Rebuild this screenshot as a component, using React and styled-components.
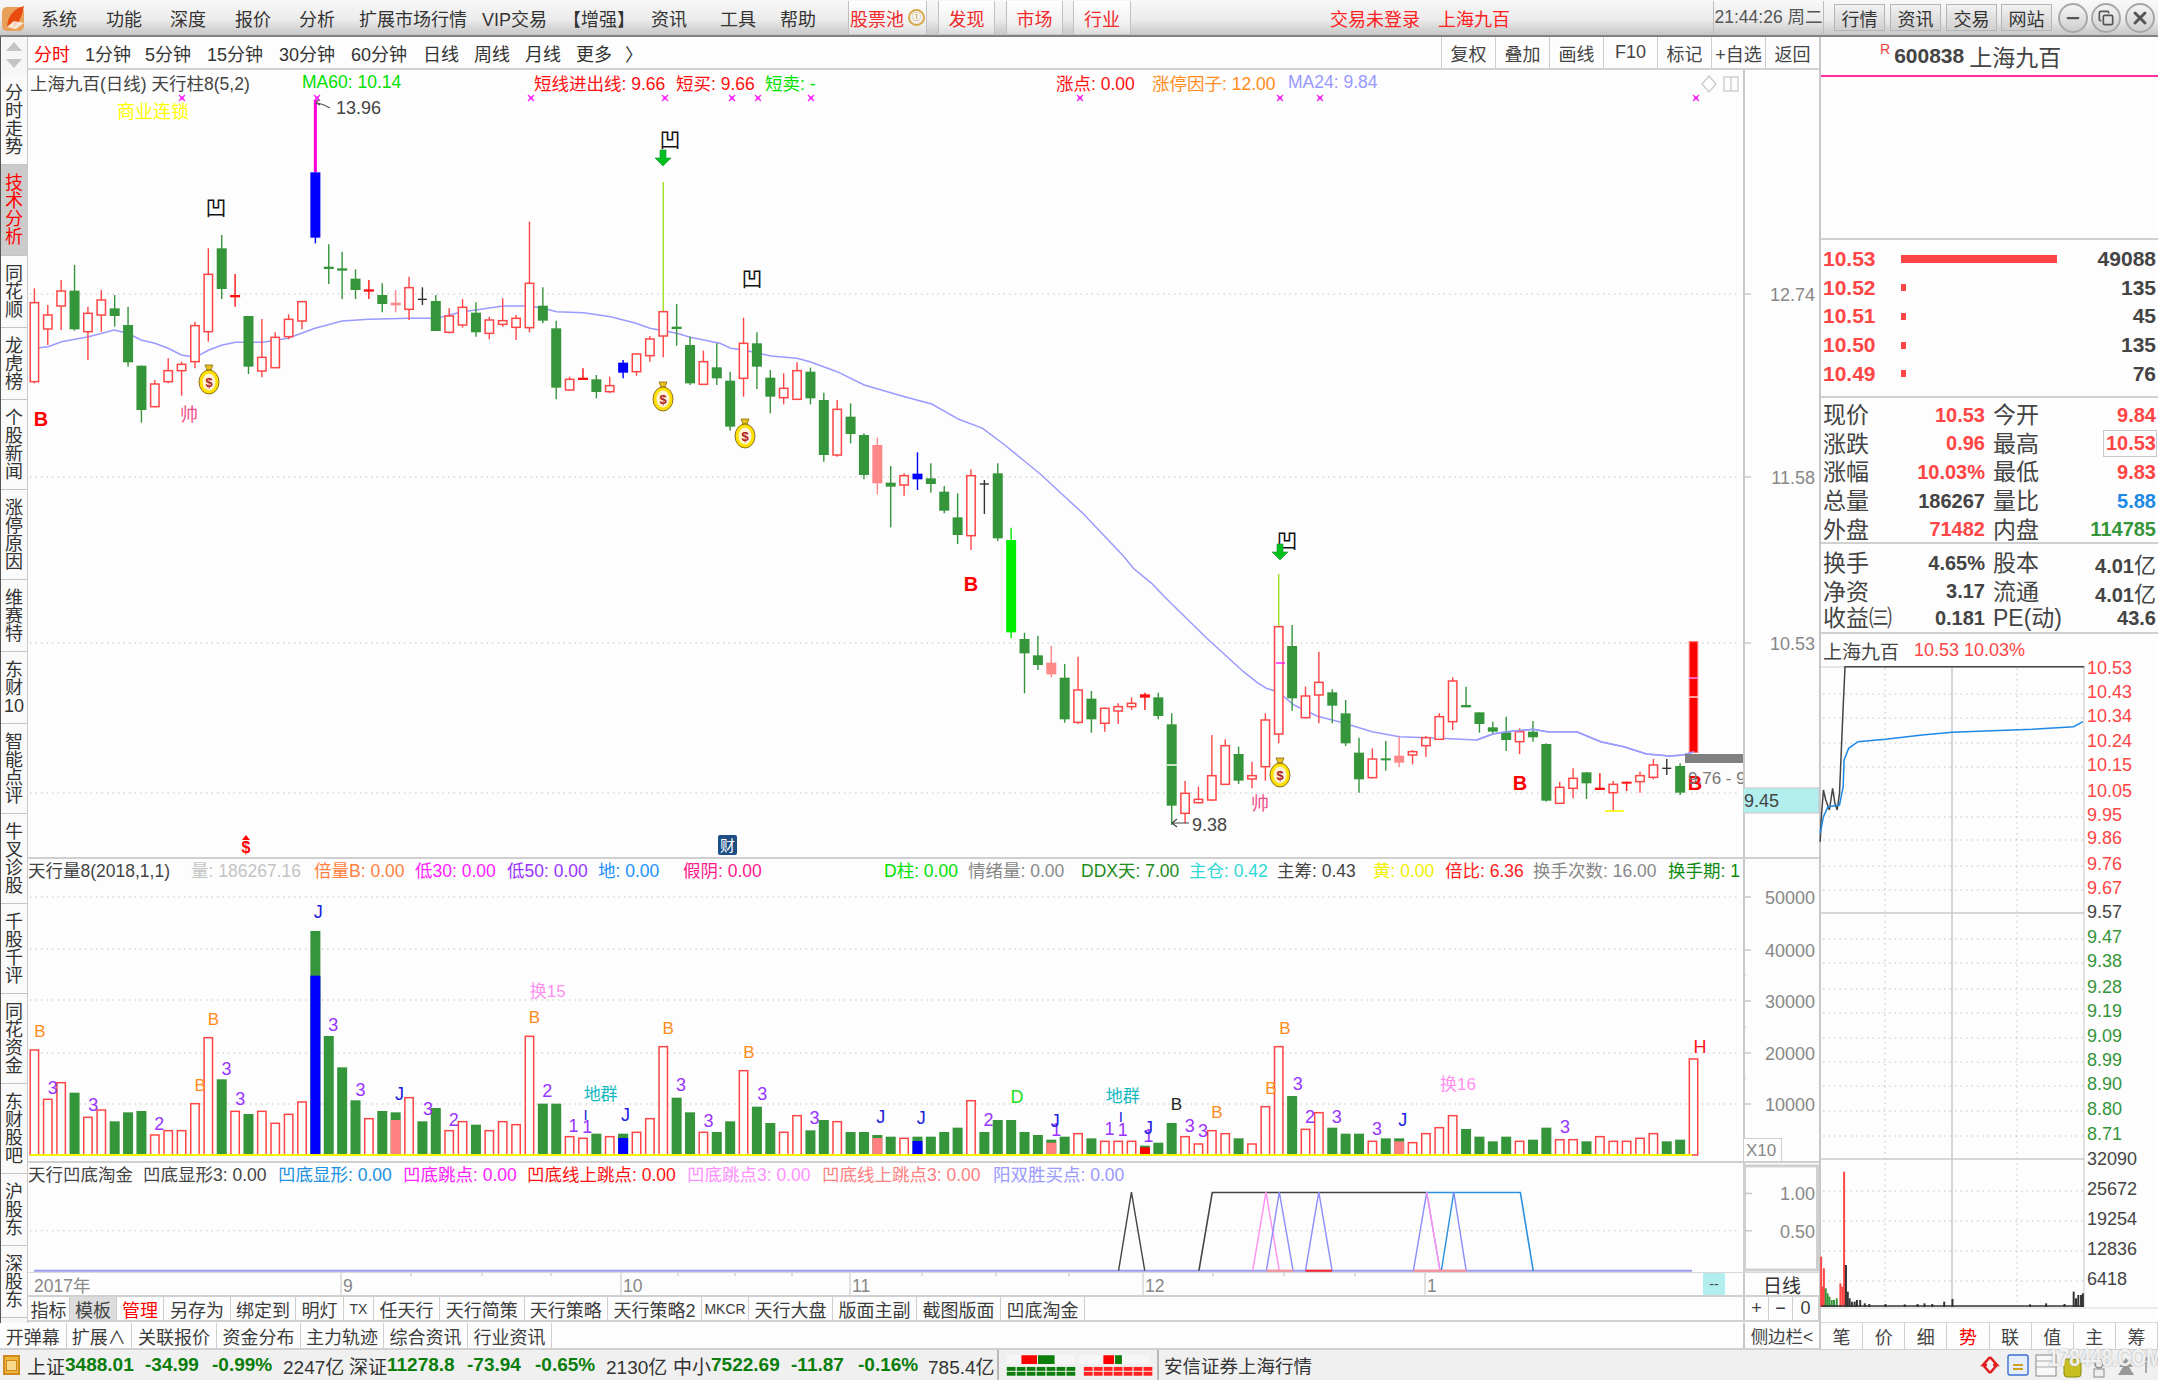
import React from "react";
import styled, { createGlobalStyle } from "styled-components";
import { Minus, Copy, X } from "lucide-react";

const FONT = `"Liberation Sans", "Noto Sans CJK SC", sans-serif`;

const GlobalStyle = createGlobalStyle`
	html, body {
		margin: 0;
		padding: 0;
		background: #fdfdfd;
	}
	body {
		font-family: ${FONT};
		width: 2158px;
		height: 1380px;
		overflow: hidden;
	}
`;

const RED = "#ff4545";
const GREEN = "#35953a";

/* candles: [kind, high, top, bottom, low], y values read from the picture */
const CANDLES_A = [
	["r",865,908,1145,1150],["r",915,945,987,1035],["r",840,873,918,990],["g",795,872,988,992],["r",920,940,995,1080],
	["r",870,900,945,995],["g",885,925,948,980],["g",920,975,1087,1100],["g",1097,1097,1230,1268],["r",1140,1152,1220,1222],
	["r",1075,1112,1145,1150],["r",1085,1093,1112,1187],["r",965,977,1085,1105],["r",745,823,995,1025],["g",705,745,867,897],
	["R",822,885,892,920],["g",948,948,1100,1122],["r",957,1072,1113,1132],["r",997,1012,1103,1105],["r",943,958,1010,1018],
	["r",905,905,963,988],["b",517,517,713,730],["g",733,800,807,852],["g",755,805,812,897],["g",808,836,870,897],
	["R",840,868,875,897],["g",850,885,912,937],["p",870,908,916,937],["r",830,863,928,960],["k",862,898,898,915],
	["g",885,903,993,993],["r",925,948,997,1000],["r",897,922,975,983],["g",907,938,997,1010],["r",950,960,1000,1018],
	["r",895,962,973,980],["r",945,955,982,1020],["r",665,850,983,997],["g",862,917,962,970],["g",962,985,1163,1198],
	["r",1130,1138,1170,1172],["R",1105,1133,1140,1140],["g",1125,1138,1176,1195],["r",1130,1157,1175,1180],["b",1080,1088,1118,1135],
	["r",1060,1062,1115,1127],["r",1008,1017,1067,1085],["r",935,935,1008,1072],["g",912,980,987,1037],["g",1010,1035,1150,1155],
	["r",1052,1085,1153,1155],["g",1030,1102,1135,1155],["g",1115,1142,1280,1292],["r",953,1030,1135,1190],["g",997,1030,1100,1167],
	["g",1110,1133,1190,1240],["r",1120,1165,1193,1213],["r",1087,1112,1198,1198],["g",1103,1115,1195,1213],["g",1178,1200,1365,1385],
	["r",1200,1228,1365,1370],["g",1210,1250,1302,1330],
];
const CANDLES_B = [
	["g",-80,-75,45,58],["p",-67,-45,70,103],["g",18,68,80,202],["r",40,47,75,107],["b",-23,41,58,90],
	["g",10,55,72,98],["g",78,95,152,160],["g",100,172,225,252],["r",28,47,227,270],["k",60,72,72,162],
	["g",10,40,235,243],["l",203,240,517,535],["g",518,537,580,700],["g",527,586,615,630],["p",558,608,643,652],
	["g",612,653,778,788],["r",590,690,787,792],["g",693,716,778,818],["r",743,745,790,815],["r",730,740,753,792],
	["r",712,730,740,750],["R",698,703,713,750],["g",698,712,768,778],["g",760,793,1037,1095],["r",963,1000,1060,1090],
	["r",980,1018,1028,1030],["r",825,947,1020,1022],["r",838,857,973,975],["g",860,882,962,972],["r",905,947,957,985],
	["r",760,780,920,962],["r",500,500,822,850],["g",495,558,715,752],["r",680,708,773,775],["r",575,667,705,790],
	["g",688,697,737,790],["g",720,760,850,858],["g",833,878,958,998],["r",865,897,953,955],["g",843,895,898,932],
	["p",830,887,908,922],["r",870,875,885,913],["r",828,833,857,890],["r",760,770,838,840],["r",652,663,785,810],
	["g",680,735,742,742],["g",757,757,792,818],["g",785,802,815,822],["g",770,817,840,873],["r",805,815,845,882],
	["g",783,815,832,845],["g",850,852,1022,1025],["r",965,982,1030,1030],["r",925,955,985,1015],["g",937,937,970,1017],
	["R",940,983,990,990],["r",963,973,998,1053],["R",965,965,970,993],["r",935,947,965,998],["r",897,915,952,958],
	["k",897,925,925,945],["g",910,918,998,1005],["F",545,545,877,877],
];
const CANDLES = [
	...CANDLES_A.map(([k, ...v]) => [k, ...v.map((n) => n / 3)]),
	...CANDLES_B.map(([k, ...v]) => [k, ...v.map((n) => 460 + n / 3)]),
];

const VOLUMES = [
	"r390","r538","r488","g518","r592","r570","g604","g577","g573","r645","r632","r632","r551","r353","g478","r574","g582","r574","r610","r583",
	"r546","g33","g348","g442","g541","r596","g573","g577","r533","g604","g564","r632","r605","g614","r632","r605","r614","r349","g551","g551",
	"r650","r655","g641","r650","g641","r637","r596","r380","g533","g577","r637","g636","g604","r452","g560","g609","r637","r587","g631","g600",
	"r605","g636","g636","g645","g650","r655","g650","g650","g636","g623","r542","g636","g600","g600","g636","g645","g659","g650","r641","g655",
	"r664","r664","r664","g677","g668","g609","r650","r672","r632","r641","g655","r672","r560","r380","g528","r628","r578","g623","g641","g641",
	"r664","g655","g655","r668","r641","r623","r587","g627","g650","g664","g650","r664","g659","g623","r659","r659","g664","r650","r664","r664",
	"r655","r641","g664","g659","r417",
];
const VOLUME_SPLIT = {
	21: ["#0000ff", 167], 27: ["#ff8080", 600], 44: ["#0000ff", 654], 63: ["#ff8080", 654], 66: ["#0000ff", 663],
	76: ["#ff8080", 668], 83: ["#ff0000", 682], 102: ["#ff8080", 664],
};

const MA_Z1 = [[75,1045],[105,1040],[134,1025],[193,1010],[249,990],[278,1000],[307,1020],[337,1030],[366,1045],[395,1065],[425,1072],[455,1050],[484,1035],[513,1027],[572,1027],[627,1015],[686,985],[745,963],[803,958],[892,955],[951,955],[1007,935],[1036,930],[1095,918],[1153,918],[1183,925],[1212,935],[1271,938],[1330,950],[1385,970],[1415,985],[1444,992],[1474,1000],[1503,1012],[1562,1028]];
const MA_Z2 = [[0,1030],[23,1045],[52,1050],[111,1068],[167,1075],[196,1085],[255,1115],[314,1155],[402,1190],[461,1212],[520,1258],[572,1285],[620,1335],[660,1380]];
const MA_Z5 = [[700,45],[735,90],[790,160],[880,290],[900,325],[940,370],[968,410],[1060,535],[1140,635],[1170,668],[1190,685],[1215,695],[1250,735],[1300,768],[1360,790],[1420,815],[1480,830],[1568,835]];
const MA_Z6 = [[80,840],[115,822],[145,815],[203,808],[233,815],[298,815],[350,845],[400,860],[450,882],[500,888],[530,885],[553,875]];

const zx = (n, x0) => x0 + n * 0.4592;
const pts = (list, x0, y0) => list.map(([a, b]) => `${zx(a, x0).toFixed(1)},${(y0 + b / 3).toFixed(1)}`).join(" ");

const MA_LINE = [pts(MA_Z1, 0, 0), pts(MA_Z2, 720, 0), pts(MA_Z5, 720, 460), pts(MA_Z6, 1440, 460)].join(" ");

const candleX = (i) => 34.4 + 13.38 * i;

const Page = styled.div`
	width: 2158px;
	height: 1380px;
	display: flex;
	flex-direction: column;
	position: relative;
	background: #fdfdfd;
	color: #444;
	overflow: hidden;
`;

const TopBar = styled.div`
	height: 35px;
	flex: none;
	display: flex;
	align-items: center;
	background: linear-gradient(#f8f8f8, #ececec 55%, #c6c6c6);
	border-bottom: 2px solid #808080;
`;

const Logo = styled.svg`
	width: 28px;
	height: 30px;
	flex: none;
	margin-right: 13px;
`;

const MenuItem = styled.div`
	flex: 0 0 ${(p) => p.$w}px;
	margin-left: ${(p) => p.$left || 0}px;
	font-size: 18px;
	color: ${(p) => p.$color || "#333"};
	white-space: nowrap;
`;

const TopButton = styled.div`
	flex: none;
	height: 33px;
	width: ${(p) => p.$w}px;
	margin-right: ${(p) => p.$gap || 0}px;
	display: flex;
	align-items: center;
	justify-content: center;
	gap: 4px;
	font-size: 18px;
	color: #f02a2a;
	background: linear-gradient(#fff, #f0f0f0 70%, #dcdcdc);
	border-left: 1px solid #c0c0c0;
	border-right: 1px solid #c0c0c0;
	box-sizing: border-box;
`;

const Coin = styled.span`
	width: 13px;
	height: 13px;
	border-radius: 50%;
	border: 2px solid #d8a94a;
	color: #c08a20;
	font-size: 9px;
	line-height: 13px;
	text-align: center;
	box-sizing: content-box;
`;

const Clock = styled.div`
	flex: 0 0 111px;
	height: 33px;
	line-height: 33px;
	text-align: center;
	font-size: 17.5px;
	color: #555;
	margin-left: ${(p) => p.$left}px;
	border-left: 1px solid #bbb;
	border-right: 1px solid #bbb;
	box-sizing: border-box;
	white-space: nowrap;
`;

const SoftButton = styled.div`
	flex: 0 0 51px;
	height: 27px;
	margin-left: ${(p) => p.$left}px;
	display: flex;
	align-items: center;
	justify-content: center;
	font-size: 18px;
	color: #333;
	background: linear-gradient(#f2f2f2, #d0d0d0);
	border: 1px solid #b5b5b5;
	box-sizing: border-box;
`;

const RoundButton = styled.div`
	flex: 0 0 30px;
	height: 30px;
	margin-left: ${(p) => p.$left}px;
	border-radius: 50%;
	display: flex;
	align-items: center;
	justify-content: center;
	color: #555;
	background: linear-gradient(#f4f4f4, #cfcfcf);
	border: 2px solid #a8a8a8;
	box-sizing: border-box;
`;

const Body = styled.div`
	flex: 1;
	display: flex;
	min-height: 0;
`;

const LeftColumn = styled.div`
	width: 1819px;
	flex: none;
	display: flex;
	flex-direction: column;
`;

const Upper = styled.div`
	flex: 1;
	display: flex;
	min-height: 0;
`;

const Rail = styled.div`
	width: 28px;
	flex: none;
	display: flex;
	flex-direction: column;
	border-left: 1px solid #555;
	border-right: 1px solid #c8c8c8;
	box-sizing: border-box;
	background: #f6f6f6;
`;

const RailScroll = styled.div`
	height: 38px;
	flex: none;
	display: flex;
	flex-direction: column;
	align-items: center;
	gap: 8px;
	padding-top: 5px;
	box-sizing: border-box;
`;

const Arrow = styled.div`
	width: 0;
	height: 0;
	border-left: 8px solid transparent;
	border-right: 8px solid transparent;
	border-${(p) => (p.$down ? "top" : "bottom")}: 9px solid #c4c4c4;
`;

const RailItem = styled.div`
	height: ${(p) => p.$h}px;
	flex: none;
	display: flex;
	flex-direction: column;
	align-items: center;
	justify-content: center;
	font-size: 18px;
	line-height: 18px;
	color: ${(p) => (p.$active ? "#ff0000" : "#333")};
	background: ${(p) => (p.$active ? "#cbcbcb" : "#fafafa")};
	border-bottom: 1px solid #c4c4c4;
	box-sizing: border-box;
`;

const Main = styled.div`
	flex: 1;
	display: flex;
	flex-direction: column;
	min-width: 0;
`;

const PeriodBar = styled.div`
	height: 33px;
	flex: none;
	display: flex;
	align-items: center;
	justify-content: space-between;
	border-bottom: 2px solid #d2d2d2;
	box-sizing: border-box;
`;

const Periods = styled.div`
	display: flex;
	align-items: center;
	padding-left: 6px;
`;

const Period = styled.div`
	flex: 0 0 ${(p) => p.$w}px;
	font-size: 18px;
	color: ${(p) => (p.$active ? "#ff0000" : "#333")};
	white-space: nowrap;
`;

const Tools = styled.div`
	display: flex;
	height: 100%;
`;

const Tool = styled.div`
	width: 54px;
	display: flex;
	align-items: center;
	justify-content: center;
	font-size: 18px;
	color: #444;
	border-left: 1px solid #cfcfcf;
	box-sizing: border-box;
`;

const Pane = styled.div`
	height: ${(p) => p.$h}px;
	flex: none;
	display: flex;
	border-top: ${(p) => (p.$line ? "2px solid #cfcfcf" : "none")};
	box-sizing: border-box;
`;

const Plot = styled.div`
	flex: 1;
	position: relative;
	min-width: 0;
`;

const PlotDrawing = styled.svg`
	position: absolute;
	left: 0;
	top: 0;
	width: 100%;
	height: 100%;
	display: block;
`;

const Legend = styled.div`
	position: relative;
	z-index: 1;
	height: ${(p) => p.$h}px;
	display: flex;
	align-items: center;
	padding-left: ${(p) => p.$left || 0}px;
	font-size: 17.5px;
	white-space: nowrap;
`;

const LegendItem = styled.div`
	flex: 0 0 ${(p) => p.$w}px;
	color: ${(p) => p.$color};
`;

const Scale = styled.div`
	width: 76px;
	flex: none;
	position: relative;
	border-left: 2px solid #c8c8c8;
	box-sizing: border-box;
`;

const ScaleDrawing = styled.svg`
	position: absolute;
	left: -2px;
	top: 0;
	width: 76px;
	height: 100%;
	display: block;
`;

const TimeRow = styled.div`
	height: 25px;
	flex: none;
	display: flex;
	border-top: 1px solid #d8d8d8;
	border-bottom: 2px solid #d0d0d0;
	box-sizing: border-box;
`;

const TimePlot = styled.div`
	flex: 1;
	position: relative;
`;

const TimeCell = styled.div`
	width: 76px;
	flex: none;
	display: flex;
	align-items: center;
	justify-content: center;
	font-size: 19px;
	color: #333;
	border-left: 2px solid #c8c8c8;
	box-sizing: border-box;
`;

const TabRow = styled.div`
	height: ${(p) => p.$h}px;
	flex: none;
	display: flex;
	border-bottom: 2px solid #d0d0d0;
	box-sizing: border-box;
`;

const Tab = styled.div`
	flex: 0 0 ${(p) => p.$w}px;
	display: flex;
	align-items: center;
	justify-content: center;
	font-size: ${(p) => p.$size || 18}px;
	color: ${(p) => p.$color || "#3c3c3c"};
	background: ${(p) => p.$bg || "transparent"};
	border-right: 1px solid #cfcfcf;
	box-sizing: border-box;
	white-space: nowrap;
`;

const TabFill = styled.div`
	flex: 1;
`;

const ZoomCell = styled.div`
	width: 76px;
	flex: none;
	display: flex;
	border-left: 2px solid #c8c8c8;
	box-sizing: border-box;
`;

const SideToggle = styled.div`
	width: 76px;
	flex: none;
	display: flex;
	align-items: center;
	justify-content: center;
	font-size: 17.5px;
	color: #444;
	border-left: 2px solid #c8c8c8;
	box-sizing: border-box;
`;

const Panel = styled.div`
	flex: 1;
	display: flex;
	flex-direction: column;
	border-left: 2px solid #c8c8c8;
	box-sizing: border-box;
	min-width: 0;
`;

const QuoteTitle = styled.div`
	height: 40px;
	flex: none;
	display: flex;
	align-items: center;
	padding-left: 59px;
	gap: 5px;
	color: #444;
	border-bottom: 2px solid #ff2fa0;
	box-sizing: border-box;
`;

const TitleFlag = styled.span`
	font-size: 14px;
	color: #f04040;
	margin-bottom: 14px;
	margin-right: -1px;
`;

const TitleCode = styled.span`
	font-size: 21px;
	font-weight: 700;
`;

const TitleName = styled.span`
	font-size: 23px;
`;

const BlankBlock = styled.div`
	height: 163px;
	flex: none;
	border-bottom: 2px solid #cfcfcf;
	box-sizing: border-box;
`;

const Book = styled.div`
	height: 158px;
	flex: none;
	padding: 5px 2px 0 2px;
	border-bottom: 2px solid #cfcfcf;
	box-sizing: border-box;
`;

const BookRow = styled.div`
	height: 28.6px;
	display: flex;
	align-items: center;
	font-size: 21px;
	font-weight: 700;
`;

const BookPrice = styled.span`
	flex: 0 0 78px;
	color: ${RED};
`;

const BookBar = styled.span`
	height: ${(p) => (p.$w > 10 ? 8 : 7)}px;
	width: ${(p) => p.$w}px;
	background: ${RED};
`;

const BookVolume = styled.span`
	margin-left: auto;
	color: #444;
`;

const Stats = styled.div`
	height: ${(p) => p.$h}px;
	flex: none;
	padding: 3px 2px 0 2px;
	border-bottom: 2px solid #cfcfcf;
	box-sizing: border-box;
`;

const StatRow = styled.div`
	height: 28.6px;
	display: grid;
	grid-template-columns: 162px 163px;
	column-gap: 8px;
`;

const StatCell = styled.div`
	display: flex;
	align-items: center;
	justify-content: space-between;
`;

const StatLabel = styled.span`
	font-size: 23px;
	line-height: 28px;
	color: #444;
	white-space: nowrap;
`;

const StatValue = styled.span`
	font-size: 20px;
	font-weight: 700;
	color: ${(p) => p.$color || "#444"};
	box-shadow: ${(p) => (p.$boxed ? "0 0 0 1px #c8c8c8" : "none")};
	padding: ${(p) => (p.$boxed ? "1px 0 1px 2px" : "0")};
	white-space: nowrap;
`;

const Unit = styled.span`
	font-size: 22px;
	font-weight: 400;
`;

const MiniHead = styled.div`
	height: 32px;
	flex: none;
	display: flex;
	align-items: center;
	padding-left: 2px;
	gap: 15px;
	font-size: 19px;
	color: #444;
`;

const MiniQuote = styled.span`
	font-size: 18px;
	color: ${RED};
`;

const MiniDrawing = styled.svg`
	width: 337px;
	height: 656px;
	flex: none;
	display: block;
	overflow: visible;
`;

const PanelTabs = styled.div`
	flex: none;
	height: 26px;
	display: flex;
	border-top: 1px solid #d8d8d8;
	border-bottom: 2px solid #d0d0d0;
	box-sizing: content-box;
`;

const PanelTab = styled.div`
	flex: 1;
	display: flex;
	align-items: center;
	justify-content: center;
	font-size: 18px;
	color: ${(p) => (p.$active ? "#ff0000" : "#444")};
	border-right: 1px solid #cfcfcf;
	box-sizing: border-box;
`;

const StatusBar = styled.div`
	height: 30px;
	flex: none;
	display: flex;
	align-items: center;
	background: #f0f0f0;
	white-space: nowrap;
`;

const StatusIcon = styled.div`
	flex: none;
	width: 17px;
	height: 20px;
	margin: 0 7px 0 3px;
	background: #f2b53c;
	border: 2px solid #d08a20;
	box-sizing: border-box;
	display: flex;
	align-items: center;
	justify-content: center;
`;

const StatusInner = styled.div`
	width: 9px;
	height: 9px;
	background: #f9d98a;
	border: 1px solid #c98a20;
`;

const StatusCell = styled.div`
	flex: 0 0 ${(p) => p.$w}px;
	font-size: 19px;
	font-weight: ${(p) => (p.$num ? 700 : 400)};
	color: ${(p) => (p.$num ? "#0b7d0b" : "#333")};
`;

const Heat = styled.svg`
	flex: none;
	width: 162px;
	height: 30px;
	display: block;
	border-left: 2px solid #b8b8b8;
	border-right: 2px solid #b8b8b8;
	box-sizing: border-box;
	margin-right: 5px;
`;

const Broker = styled.div`
	font-size: 18.5px;
	color: #333;
`;

const TrayIcons = styled.svg`
	position: absolute;
	right: 0;
	bottom: 0;
	width: 190px;
	height: 30px;
	display: block;
`;

const Watermark = styled.div`
	position: absolute;
	left: 2048px;
	top: 1344px;
	font-size: 24px;
	font-weight: 700;
	color: rgba(255, 255, 255, 0.85);
	text-shadow: 0 0 2px #999;
	transform: scaleX(0.8);
	transform-origin: left top;
	white-space: nowrap;
`;

const Ink = styled.text`
	font-family: ${FONT};
	font-size: ${(p) => p.$size || 18}px;
	font-weight: ${(p) => p.$weight || 400};
	fill: ${(p) => p.$color || "#444"};
`;

const RAIL = ["分时走势", "技术分析", "同花顺", "龙虎榜", "个股新闻", "涨停原因", "维赛特", ["东", "财", "10"], "智能点评", "牛叉诊股", "千股千评", "同花资金", "东财股吧", "沪股东", "深股东"];

const MENU = [["系统",65],["功能",64],["深度",65],["报价",64],["分析",60],["扩展市场行情",123],["VIP交易",81],["【增强】",88],["资讯",69],["工具",60],["帮助",68]];

const PERIODS = [["分时",51],["1分钟",60],["5分钟",62],["15分钟",72],["30分钟",72],["60分钟",72],["日线",51],["周线",51],["月线",51],["更多",49],["〉",20]];

const TOOLS = ["复权", "叠加", "画线", "F10", "标记", "+自选", "返回"];

const LEGEND_MAIN = [
	["上海九百(日线) 天行柱8(5,2)",272,"#444"],["MA60: 10.14",232,"#00e000"],["短线进出线: 9.66",142,"#ff1010"],["短买: 9.66",89,"#ff1010"],
	["短卖: -",291,"#00e000"],["涨点: 0.00",96,"#ff1010"],["涨停因子: 12.00",136,"#ff8c1a"],["MA24: 9.84",150,"#9999ff"],
];
const LEGEND_VOL = [
	["天行量8(2018,1,1)",163,"#444"],["量: 186267.16",123,"#c4c4c4"],["倍量B: 0.00",101,"#ff8040"],["低30: 0.00",92,"#ff20ff"],["低50: 0.00",91,"#9933ff"],
	["地: 0.00",85,"#2090ff"],["假阴: 0.00",201,"#ff1a8c"],["D柱: 0.00",84,"#00e000"],["情绪量: 0.00",113,"#888"],["DDX天: 7.00",108,"#1c8c1c"],
	["主仓: 0.42",88,"#30d8d8"],["主筹: 0.43",96,"#444"],["黄: 0.00",72,"#f0f000"],["倍比: 6.36",88,"#ff2020"],["换手次数: 16.00",135,"#888"],["换手期: 1",75,"#0b8a0b"],
];
const LEGEND_IND = [
	["天行凹底淘金",115,"#444"],["凹底显形3: 0.00",135,"#444"],["凹底显形: 0.00",125,"#2090e0"],["凹底跳点: 0.00",124,"#ff20ff"],["凹底线上跳点: 0.00",160,"#ff1010"],
	["凹底跳点3: 0.00",135,"#ff90ff"],["凹底线上跳点3: 0.00",171,"#ff8080"],["阳双胜买点: 0.00",150,"#9999ff"],
];

const TABS1 = [["指标",42],["模板",47,"#444","#dcdcdc"],["管理",47,"#ff0000"],["另存为",67],["绑定到",65],["明灯",48],["TX",30],["任天行",66],["天行简策",84.5],["天行策略",83.5],["天行策略2",94],["MKCR",47],["天行大盘",84],["版面主副",84],["截图版面",84],["凹底淘金",84]];
const TABS2 = [["开弹幕",66.5],["扩展∧",65.5],["关联报价",85],["资金分布",84],["主力轨迹",83],["综合资讯",84],["行业资讯",84]];

const BOOK = [["10.53",156,"49088"],["10.52",5,"135"],["10.51",5,"45"],["10.50",5,"135"],["10.49",5,"76"]];

const STATS_A = [
	["现价",["10.53",RED],"今开",["9.84",RED]],
	["涨跌",["0.96",RED],"最高",["10.53",RED,true]],
	["涨幅",["10.03%",RED],"最低",["9.83",RED]],
	["总量",["186267"],"量比",["5.88","#1e88e5"]],
	["外盘",["71482",RED],"内盘",["114785",GREEN]],
];
const STATS_B = [
	["换手",["4.65%"],"股本",["4.01","","亿"]],
	["净资",["3.17"],"流通",["4.01","","亿"]],
	["收益㈢",["0.181"],"PE(动)",["43.6"]],
];

const MARKET = [
	[["上证",36],["3488.01",80,1],["-34.99",67,1],["-0.99%",71,1],["2247亿",66]],
	[["深证",37],["11278.8",80,1],["-73.94",68,1],["-0.65%",71,1],["2130亿",67]],
	[["中小",37],["7522.69",80,1],["-11.87",67,1],["-0.16%",70,1],["785.4亿",69]],
];

const GridLines = ({ ys, x2 }) =>
	ys.map((y) => <line key={y} x1="30" x2={x2} y1={y} y2={y} stroke="#c4c4c4" strokeDasharray="1.5 4" />);

const Candle = ({ data, i }) => {
	const [kind, high, top, bottom, low] = data;
	const x = candleX(i);
	const colors = { r: RED, R: "#ff1010", g: GREEN, b: "#0000ff", l: "#00ee00", p: "#ff8888", k: "#333", F: "#ff0000" };
	const c = colors[kind];
	const h = Math.max(bottom - top, 2);
	if (kind === "k") {
		return (
			<g stroke="#333" strokeWidth="1.4">
				<line x1={x} x2={x} y1={high} y2={low} />
				<line x1={x - 4.5} x2={x + 4.5} y1={top} y2={top} />
			</g>
		);
	}
	return (
		<g>
			<line x1={x} x2={x} y1={high} y2={low} stroke={c} strokeWidth="1.4" />
			{kind === "r" ? (
				<rect x={x - 4.2} y={top} width="8.4" height={h} fill="#fdfdfd" stroke={c} strokeWidth="1.5" />
			) : kind === "F" ? (
				<rect x={x - 4.2} y={top} width="8.4" height={h} fill="#ff0000" stroke="#ff7070" strokeWidth="1.2" />
			) : (
				<rect x={x - 5} y={top} width="10" height={h} fill={c} />
			)}
		</g>
	);
};

const Cross = ({ x }) => (
	<g stroke="#ff20ff" strokeWidth="1.3">
		<line x1={x - 3} x2={x + 3} y1="95" y2="101" />
		<line x1={x + 3} x2={x - 3} y1="95" y2="101" />
		<rect x={x - 1.5} y="96.5" width="3" height="3" fill="#ff20ff" stroke="none" />
	</g>
);

const MoneyBag = ({ x, y }) => (
	<g>
		<path d={`M${x - 4} ${y - 17} h8 l-2 5 h-4 z`} fill="#e8c020" stroke="#8a6a10" strokeWidth="0.8" />
		<ellipse cx={x} cy={y} rx="10" ry="12" fill="#ffe000" stroke="#705010" strokeWidth="0.8" />
		<ellipse cx={x} cy={y} rx="6.5" ry="8.5" fill="#fff4d8" />
		<Ink x={x} y={y + 5} $size={13} $weight={700} $color="#b02020" textAnchor="middle">$</Ink>
	</g>
);

const DownArrow = ({ x, y }) => (
	<path d={`M${x - 3} ${y} h6 v8 h5 l-8 8 l-8 -8 h5 z`} fill="#00c020" stroke="#109030" strokeWidth="0.6" />
);

const MainDrawing = () => (
	<PlotDrawing viewBox="28 70 1715 787" preserveAspectRatio="none">
		<GridLines ys={[294, 477, 643, 793]} x2={1740} />
		{[182, 317, 531, 665, 732, 758, 811, 1080, 1280, 1320, 1696].map((x) => <Cross key={x} x={x} />)}
		<polyline points={MA_LINE} fill="none" stroke="#9a9aff" strokeWidth="1.5" />
		<line x1={candleX(21)} x2={candleX(21)} y1="100" y2="172" stroke="#ff00dd" strokeWidth="3" />
		<line x1={candleX(47)} x2={candleX(47)} y1="182" y2="312" stroke="#a0e020" strokeWidth="1.4" />
		<line x1={candleX(93)} x2={candleX(93)} y1="574" y2="627" stroke="#a0e020" strokeWidth="1.4" />
		{CANDLES.map((d, i) => <Candle key={i} data={d} i={i} />)}
		<polyline points={pts(MA_Z6, 1440, 460)} fill="none" stroke="#9a9aff" strokeWidth="1.5" />
		<line x1="1276" x2="1285" y1="663" y2="663" stroke="#ff20ff" strokeWidth="1.5" />
		<line x1="1167" x2="1177" y1="765" y2="765" stroke="#fff" strokeWidth="1.5" />
		<line x1="1689" x2="1698" y1="678" y2="678" stroke="#ff80ff" strokeWidth="1.5" />
		<line x1="1689" x2="1698" y1="697" y2="697" stroke="#ffd0d0" strokeWidth="1.5" />
		<line x1="1605" x2="1624" y1="811" y2="811" stroke="#f5f500" strokeWidth="1.6" />
		<rect x="1685" y="754" width="58" height="9" fill="#808080" />
		{[[216, 215], [670, 147], [752, 286], [1287, 548]].map(([x, y]) => (
			<Ink key={x} x={x} y={y} $size={21} $color="#111" textAnchor="middle">凹</Ink>
		))}
		<DownArrow x={663} y={150} />
		<DownArrow x={1280} y={544} />
		<MoneyBag x={209} y={382} />
		<MoneyBag x={663} y={399} />
		<MoneyBag x={745} y={436} />
		<MoneyBag x={1280} y={775} />
		<Ink x={189} y={421} $size={18} $color="#f0508a" textAnchor="middle">帅</Ink>
		<Ink x={1260} y={810} $size={18} $color="#f0508a" textAnchor="middle">帅</Ink>
		{[[41, 426], [971, 591], [1520, 790], [1695, 790]].map(([x, y]) => (
			<Ink key={x} x={x} y={y} $size={20} $weight={700} $color="#ff0000" textAnchor="middle">B</Ink>
		))}
		<Ink x={117} y={118} $size={18} $color="#ffff00">商业连锁</Ink>
		<path d="M316 103 l3 -4 m-3 4 l4 2 m-4 -2 c5 0 8 2 14 5" fill="none" stroke="#555" strokeWidth="1.2" />
		<Ink x={336} y={114} $size={18}>13.96</Ink>
		<path d="M1172 823 h17 m-17 0 l5 -4 m-5 4 l5 4" fill="none" stroke="#444" strokeWidth="1.2" />
		<Ink x={1192} y={831} $size={18}>9.38</Ink>
		<Ink x={1688} y={784} $size={17} $color="#777">9.76 - 9</Ink>
		<path d="M246 835 l4 5 h-8 z" fill="#ff0000" />
		<Ink x={246} y={853} $size={16} $weight={700} $color="#ff0000" textAnchor="middle">$</Ink>
		<rect x="718" y="835" width="19" height="20" rx="2" fill="#1d4f84" />
		<Ink x={727.5} y={851} $size={15} $color="#fff" textAnchor="middle">财</Ink>
		<path d="M1709 76 l7 8 l-7 8 l-7 -8 z" fill="none" stroke="#ccc" strokeWidth="1.4" />
		<rect x="1724" y="77" width="14" height="14" fill="none" stroke="#ccc" strokeWidth="1.4" />
		<line x1="1731" x2="1731" y1="77" y2="91" stroke="#ccc" strokeWidth="1.4" />
	</PlotDrawing>
);

const VolumeDrawing = () => {
	const L = (t, a, b, c, size) => ({ t, a, b, c, size });
	const z7 = (t, c, size, list) => list.map(([a, b]) => L(t, a * 0.4592, 920 + b / 3, c, size));
	const z8 = (t, c, size, list) => list.map(([a, b]) => L(t, 720 + a * 0.4592, 920 + b / 3, c, size));
	const marks = [
		...z7("B", "#ff8c1a", 17, [[87,333],[465,297],[436,495],[1164,292],[1455,323]]),
		...z8("B", "#ff8c1a", 17, [[63,395],[1230,323],[1200,503],[1082,575]]),
		...z7("3", "#9933ff", 18, [[115,503],[203,553],[493,445],[523,535],[726,315],[785,508],[932,567],[1483,495],[1543,603]]),
		...z8("3", "#9933ff", 18, [[92,522],[206,593],[1023,617],[1052,633],[1258,490],[1343,590],[1431,627]]),
		...z7("2", "#9933ff", 18, [[347,612],[988,598],[1192,513]]),
		...z8("2", "#9933ff", 18, [[585,598],[1285,590]]),
		...z7("1", "#9933ff", 18, [[1249,617],[1279,620]]),
		...z8("1", "#9933ff", 18, [[732,630],[848,625],[877,630],[933,648]]),
		...z7("J", "#2020e0", 18, [[870,520],[1362,585],[693,-25]]),
		...z8("J", "#2020e0", 18, [[350,590],[438,592],[730,603],[933,622],[1487,598]]),
		...z7("I", "#2020e0", 15, [[1275,585]]),
		...z8("I", "#2020e0", 15, [[873,590]]),
		...z7("地群", "#10b8c0", 17, [[1308,523]]),
		...z8("地群", "#10b8c0", 17, [[877,527]]),
		...z7("换15", "#ff90f0", 17, [[1193,212]]),
		...z8("D", "#20e020", 18, [[647,530]]),
		...z8("B", "#222", 17, [[994,553]]),
		L("换16", 1458, 1084, "#ff90f0", 17),
		L("3", 1565, 1127, "#9933ff", 18),
		L("H", 1700, 1047, "#ff1010", 18),
	];
	return (
		<PlotDrawing viewBox="28 859 1715 302" preserveAspectRatio="none">
			<GridLines ys={[897, 949, 1000, 1053, 1104]} x2={1740} />
			{VOLUMES.map((v, i) => {
				const x = candleX(i);
				const top = 920 + Number(v.slice(1)) / 3;
				const split = VOLUME_SPLIT[i];
				if (v[0] === "r") {
					return <rect key={i} x={x - 4.2} y={top} width="8.4" height={1155 - top} fill="#fdfdfd" stroke={RED} strokeWidth="1.5" />;
				}
				return (
					<g key={i}>
						<rect x={x - 5} y={top} width="10" height={1155 - top} fill={GREEN} />
						{split && <rect x={x - 5} y={920 + split[1] / 3} width="10" height={1155 - 920 - split[1] / 3} fill={split[0]} />}
					</g>
				);
			})}
			<line x1="30" x2="1692" y1="1155" y2="1155" stroke="#f5f500" strokeWidth="2" />
			{marks.map((m, i) => (
				<Ink key={i} x={m.a} y={m.b + m.size * 0.36} $size={m.size} $color={m.c} textAnchor="middle">{m.t}</Ink>
			))}
		</PlotDrawing>
	);
};

const IndicatorDrawing = () => {
	const y = (n) => 920 + n / 3;
	const x8 = (n) => 720 + n * 0.4592;
	const x9 = (n) => 1440 + n * 0.4592;
	const tri = (a, b, c) => `${x8(a)},${y(1052)} ${x8(b)},${y(812)} ${x8(c)},${y(1052)}`;
	return (
		<PlotDrawing viewBox="28 1161 1715 111" preserveAspectRatio="none">
			<GridLines ys={[1230]} x2={1740} />
			<line x1="34" x2="1692" y1="1270.7" y2="1270.7" stroke="#9a9aee" strokeWidth="2" />
			<polyline points={tri(868, 896, 925)} fill="none" stroke="#444" strokeWidth="1.4" />
			<polyline points={`${x8(1043)},${y(1052)} ${x8(1072)},${y(813)} ${x8(1538)},${y(813)}`} fill="none" stroke="#444" strokeWidth="1.6" />
			<polyline points={`${x8(1538)},${y(813)} ${x9(175)},${y(813)} ${x9(203)},${y(1052)}`} fill="none" stroke="#2a90e0" strokeWidth="1.6" />
			<polyline points={`${x9(3)},${y(1052)} ${x9(30)},${y(813)}`} fill="none" stroke="#2a90e0" strokeWidth="1.4" />
			<polyline points={tri(1160, 1189, 1218)} fill="none" stroke="#ff90f0" strokeWidth="1.4" />
			<polyline points={tri(1190, 1218, 1248)} fill="none" stroke="#8c8cff" strokeWidth="1.4" />
			<polyline points={tri(1275, 1304, 1333)} fill="none" stroke="#8c8cff" strokeWidth="1.4" />
			<polyline points={tri(1510, 1539, 1568)} fill="none" stroke="#8c8cff" strokeWidth="1.4" />
			<polyline points={`${x8(1539)},${y(812)} ${x8(1568)},${y(1052)}`} fill="none" stroke="#ff90f0" strokeWidth="1.4" />
			<polyline points={`${x9(30)},${y(812)} ${x9(57)},${y(1052)}`} fill="none" stroke="#8c8cff" strokeWidth="1.4" />
			<line x1={x8(1190)} x2={x8(1248)} y1="1270.7" y2="1270.7" stroke="#ff9090" strokeWidth="2" />
			<line x1={x8(1275)} x2={x8(1333)} y1="1270.7" y2="1270.7" stroke="#ff2020" strokeWidth="2" />
			<line x1={x8(1510)} x2={x9(57)} y1="1270.7" y2="1270.7" stroke="#ff9090" strokeWidth="2" />
		</PlotDrawing>
	);
};

const TimeAxis = () => (
	<PlotDrawing viewBox="28 0 1715 22" preserveAspectRatio="none">
		{[411, 482, 551, 678, 735, 792, 922, 996, 1069, 1213, 1284, 1355].map((x) => (
			<line key={x} x1={x} x2={x} y1="0" y2="3" stroke="#bbb" />
		))}
		{[[341, "9"], [621, "10"], [850, "11"], [1143, "12"], [1425, "1"]].map(([x, t]) => (
			<g key={t}>
				<line x1={x} x2={x} y1="0" y2="22" stroke="#c4c4c4" />
				<Ink x={x + 2} y={19} $size={17.5} $color="#888">{t}</Ink>
			</g>
		))}
		<Ink x={34} y={19} $size={17.5} $color="#888">2017年</Ink>
		<rect x="1703" y="0" width="22" height="22" fill="#b2eeee" />
		<Ink x={1714} y={16} $size={14} $color="#444" textAnchor="middle">--</Ink>
	</PlotDrawing>
);

const MainScale = () => (
	<ScaleDrawing viewBox="1743 70 76 787" preserveAspectRatio="none">
		{[[294, "12.74"], [477, "11.58"], [643, "10.53"]].map(([y, t]) => (
			<g key={t}>
				<line x1="1743" x2="1751" y1={y} y2={y} stroke="#c8c8c8" strokeWidth="1.5" />
				<Ink x={1815} y={y + 7} $size={18} $color="#888" textAnchor="end">{t}</Ink>
			</g>
		))}
		<rect x="1743" y="788" width="76" height="25" fill="#b2eeee" stroke="#c8c8c8" />
		<Ink x={1744} y={807} $size={18} $color="#444">9.45</Ink>
	</ScaleDrawing>
);

const VolumeScale = () => (
	<ScaleDrawing viewBox="1743 859 76 302" preserveAspectRatio="none">
		{[[897, "50000"], [950, "40000"], [1001, "30000"], [1053, "20000"], [1104, "10000"]].map(([y, t]) => (
			<g key={t}>
				<line x1="1743" x2="1751" y1={y} y2={y} stroke="#c8c8c8" strokeWidth="1.5" />
				<Ink x={1815} y={y + 7} $size={18} $color="#888" textAnchor="end">{t}</Ink>
			</g>
		))}
		{[975, 1027, 1078].map((y) => <line key={y} x1="1743" x2="1746" y1={y} y2={y} stroke="#c8c8c8" />)}
		<rect x="1743.5" y="1138.5" width="38" height="23" fill="#fdfdfd" stroke="#d0d0d0" />
		<Ink x={1746} y={1156} $size={17} $color="#888">X10</Ink>
	</ScaleDrawing>
);

const IndicatorScale = () => (
	<ScaleDrawing viewBox="1743 1161 76 111" preserveAspectRatio="none">
		<rect x="1744.5" y="1164" width="73" height="106" fill="none" stroke="#cfcfcf" strokeWidth="3" />
		{[[1192, "1.00"], [1230, "0.50"]].map(([y, t]) => (
			<g key={t}>
				<line x1="1744" x2="1752" y1={y} y2={y} stroke="#c8c8c8" strokeWidth="1.5" />
				<Ink x={1815} y={y + 7} $size={18} $color="#888" textAnchor="end">{t}</Ink>
			</g>
		))}
	</ScaleDrawing>
);

const MINI_PRICE = [
	[667,"10.53",RED],[691,"10.43",RED],[715,"10.34",RED],[740,"10.24",RED],[764,"10.15",RED],[790,"10.05",RED],[814,"9.95",RED],[837,"9.86",RED],[863,"9.76",RED],[887,"9.67",RED],
	[911,"9.57","#444"],[936,"9.47",GREEN],[960,"9.38",GREEN],[986,"9.28",GREEN],[1010,"9.19",GREEN],[1035,"9.09",GREEN],[1059,"8.99",GREEN],[1083,"8.90",GREEN],[1108,"8.80",GREEN],[1133,"8.71",GREEN],
	[1158,"32090","#444"],[1188,"25672","#444"],[1218,"19254","#444"],[1248,"12836","#444"],[1278,"6418","#444"],
];
const MINI_BLACK = [[828,1145],[830,1080],[835,990],[840,1020],[848,1050],[855,985],[860,1030],[865,1050],[870,1000],[878,740],[882,620],[1403,620]];
const MINI_BLUE = [[828,1120],[835,1070],[845,1040],[870,1035],[878,980],[880,900],[890,865],[910,845],[970,838],[1050,825],[1115,817],[1290,808],[1380,800],[1400,785]];
const MINI_BARS = [
	[830,1010,RED],[833,1100,RED],[836,1045,RED],[840,1105,GREEN],[844,1120,GREEN],[848,1130,GREEN],[853,1140,GREEN],[858,1140,GREEN],[864,1135,GREEN],
	[872,1090,RED],[876,1100,RED],[880,755,RED],[884,1035,"#333"],[888,1115,"#333"],[892,1135,"#333"],[897,1145,"#333"],[903,1145,"#333"],[908,1140,"#333"],[915,1140,"#333"],[925,1150,"#333"],[935,1152,"#333"],
	[970,1152,"#333"],[1012,1153,"#333"],[1040,1152,"#333"],[1055,1150,"#333"],[1072,1152,"#333"],[1098,1145,"#333"],[1116,1137,"#333"],[1285,1153,"#333"],[1320,1150,"#333"],[1360,1152,"#333"],
	[1380,1115,"#333"],[1385,1135,"#333"],[1390,1125,"#333"],[1396,1125,"#333"],[1400,1120,"#333"],
];

const MiniChart = () => {
	const upper = (n) => 460 + n / 3;
	const lower = (n) => 920 + n / 3;
	const xx = (n) => 1440 + n * 0.4592;
	return (
		<MiniDrawing viewBox="1821 666 337 656">
			{MINI_PRICE.filter(([y]) => ![667, 911, 1158].includes(y)).map(([y]) => (
				<line key={y} x1="1823" x2="2084" y1={y + 3} y2={y + 3} stroke="#c4c4c4" strokeDasharray="1.5 4" />
			))}
			{[1885, 2017].map((x) => <line key={x} x1={x} x2={x} y1="668" y2="1307" stroke="#c4c4c4" strokeDasharray="1.5 4" />)}
			<line x1="1952" x2="1952" y1="668" y2="1307" stroke="#c8c8c8" strokeWidth="1.5" />
			<line x1="1821" x2="2084" y1="667" y2="667" stroke="#d0d0d0" />
			<line x1="1821" x2="2084" y1="913" y2="913" stroke="#c8c8c8" strokeWidth="1.5" />
			<line x1="1821" x2="2084" y1="1159" y2="1159" stroke="#c8c8c8" strokeWidth="1.5" />
			<line x1="2084" x2="2084" y1="667" y2="1308" stroke="#c8c8c8" />
			<line x1="1821" x2="2158" y1="1308" y2="1308" stroke="#d8d8d8" />
			{MINI_BARS.map(([a, b, c], i) => (
				<line key={i} x1={xx(a)} x2={xx(a)} y1={lower(b)} y2="1307" stroke={c} strokeWidth="2" />
			))}
			<line x1="1821" x2="2084" y1="1306" y2="1306" stroke="#333" strokeWidth="1.6" />
			<polyline points={MINI_BLACK.map(([a, b]) => `${xx(a)},${upper(b)}`).join(" ")} fill="none" stroke="#444" strokeWidth="1.5" />
			<polyline points={MINI_BLUE.map(([a, b]) => `${xx(a)},${upper(b)}`).join(" ")} fill="none" stroke="#1e88e5" strokeWidth="1.5" />
			{MINI_PRICE.map(([y, t, c]) => (
				<Ink key={t} x={2087} y={y + 7} $size={18} $color={c}>{t}</Ink>
			))}
		</MiniDrawing>
	);
};

const Stat = ({ label, value }) => (
	<StatCell>
		<StatLabel>{label}</StatLabel>
		<StatValue $color={value[1]} $boxed={value[2] === true}>
			{value[0]}
			{typeof value[2] === "string" && <Unit>{value[2]}</Unit>}
		</StatValue>
	</StatCell>
);

const StatusTray = () => (
	<TrayIcons viewBox="1968 0 190 30">
		<path d="M1990 7 l7 8 h-4 v0 m-3 -8 l-7 8 h4 M1990 23 l7 -8 M1990 23 l-7 -8" fill="none" stroke="#e02020" strokeWidth="2.6" />
		<rect x="2008" y="5" width="20" height="20" rx="2" fill="#e6eefc" stroke="#3a6ed0" strokeWidth="1.4" />
		<rect x="2013" y="14" width="10" height="2" fill="#d0a020" />
		<rect x="2013" y="18" width="10" height="2" fill="#d0a020" />
		<rect x="2036" y="5" width="20" height="21" fill="#f8f8f8" stroke="#888" />
		<line x1="2036" x2="2056" y1="11" y2="11" stroke="#aaa" />
		<line x1="2036" x2="2056" y1="17" y2="17" stroke="#aaa" />
		<rect x="2064" y="9" width="17" height="18" rx="3" fill="#c8c020" stroke="#8a8a10" />
		<circle cx="2099" cy="14" r="4" fill="none" stroke="#888" strokeWidth="1.5" />
		<rect x="2094" y="19" width="10" height="8" fill="#eee" stroke="#888" />
		<path d="M2126 8 l7 9 h-4 l5 8 h-16 l5 -8 h-4 z" fill="#999" />
		<circle cx="2146" cy="9" r="2" fill="#999" />
		<rect x="2145" y="12" width="2" height="11" fill="#aaa" />
	</TrayIcons>
);

const App = () => {
	return (
		<Page>
			<GlobalStyle />
			<TopBar>
				<Logo viewBox="0 0 28 30">
					<rect x="2" y="4" width="22" height="24" rx="5" fill="#e8a058" />
					<path d="M24 3 C14 6 8 12 7 24 L14 18 L13 25 C20 20 22 12 24 3 Z" fill="#e84a10" />
					<path d="M7 24 L14 18 L24 20 L16 26 Z" fill="#fff" opacity="0.75" />
				</Logo>
				{MENU.map(([t, w]) => <MenuItem key={t} $w={w}>{t}</MenuItem>)}
				<TopButton $w={79} $gap={11}>股票池<Coin>①</Coin></TopButton>
				<TopButton $w={57} $gap={11}>发现</TopButton>
				<TopButton $w={57} $gap={10}>市场</TopButton>
				<TopButton $w={58}>行业</TopButton>
				<MenuItem $w={108} $left={199} $color="#ff2020">交易未登录</MenuItem>
				<MenuItem $w={70} $color="#ff2020">上海九百</MenuItem>
				<Clock $left={203}>21:44:26 周二</Clock>
				<SoftButton $left={10}>行情</SoftButton>
				<SoftButton $left={5}>资讯</SoftButton>
				<SoftButton $left={5}>交易</SoftButton>
				<SoftButton $left={4}>网站</SoftButton>
				<RoundButton $left={6}><Minus size={18} strokeWidth={3} /></RoundButton>
				<RoundButton $left={3}><Copy size={16} strokeWidth={2.5} /></RoundButton>
				<RoundButton $left={4}><X size={20} strokeWidth={3.5} /></RoundButton>
			</TopBar>
			<Body>
				<LeftColumn>
					<Upper>
						<Rail>
							<RailScroll>
								<Arrow />
								<Arrow $down />
							</RailScroll>
							{RAIL.map((item, i) => {
								const chars = Array.isArray(item) ? item : item.split("");
								return (
									<RailItem key={i} $h={i === 1 ? 91 : chars.length * 18 + 18} $active={i === 1}>
										{chars.map((c, j) => <span key={j}>{c}</span>)}
									</RailItem>
								);
							})}
						</Rail>
						<Main>
							<PeriodBar>
								<Periods>
									{PERIODS.map(([t, w], i) => <Period key={t} $w={w} $active={i === 0}>{t}</Period>)}
								</Periods>
								<Tools>
									{TOOLS.map((t) => <Tool key={t}>{t}</Tool>)}
								</Tools>
							</PeriodBar>
							<Pane $h={787}>
								<Plot>
									<MainDrawing />
									<Legend $h={24} $left={2}>
										{LEGEND_MAIN.map(([t, w, c]) => <LegendItem key={t} $w={w} $color={c}>{t}</LegendItem>)}
									</Legend>
								</Plot>
								<Scale><MainScale /></Scale>
							</Pane>
							<Pane $h={304} $line>
								<Plot>
									<VolumeDrawing />
									<Legend $h={21}>
										{LEGEND_VOL.map(([t, w, c]) => <LegendItem key={t} $w={w} $color={c}>{t}</LegendItem>)}
									</Legend>
								</Plot>
								<Scale><VolumeScale /></Scale>
							</Pane>
							<Pane $h={111} $line>
								<Plot>
									<IndicatorDrawing />
									<Legend $h={21}>
										{LEGEND_IND.map(([t, w, c]) => <LegendItem key={t} $w={w} $color={c}>{t}</LegendItem>)}
									</Legend>
								</Plot>
								<Scale><IndicatorScale /></Scale>
							</Pane>
							<TimeRow>
								<TimePlot><TimeAxis /></TimePlot>
								<TimeCell>日线</TimeCell>
							</TimeRow>
							<TabRow $h={25}>
								{TABS1.map(([t, w, c, bg]) => (
									<Tab key={t} $w={w} $color={c} $bg={bg} $size={t === "TX" || t === "MKCR" ? 14 : 18}>{t}</Tab>
								))}
								<TabFill />
								<ZoomCell>
									<Tab $w={24}>+</Tab>
									<Tab $w={24}>−</Tab>
									<Tab $w={26}>0</Tab>
								</ZoomCell>
							</TabRow>
						</Main>
					</Upper>
					<TabRow $h={27}>
						{TABS2.map(([t, w]) => <Tab key={t} $w={w}>{t}</Tab>)}
						<TabFill />
						<SideToggle>侧边栏&lt;</SideToggle>
					</TabRow>
				</LeftColumn>
				<Panel>
					<QuoteTitle>
						<TitleFlag>R</TitleFlag>
						<TitleCode>600838</TitleCode>
						<TitleName>上海九百</TitleName>
					</QuoteTitle>
					<BlankBlock />
					<Book>
						{BOOK.map(([p, w, v]) => (
							<BookRow key={p}>
								<BookPrice>{p}</BookPrice>
								<BookBar $w={w} />
								<BookVolume>{v}</BookVolume>
							</BookRow>
						))}
					</Book>
					<Stats $h={146}>
						{STATS_A.map((r) => (
							<StatRow key={r[0]}>
								<Stat label={r[0]} value={r[1]} />
								<Stat label={r[2]} value={r[3]} />
							</StatRow>
						))}
					</Stats>
					<Stats $h={90}>
						{STATS_B.map((r) => (
							<StatRow key={r[0]}>
								<Stat label={r[0]} value={r[1]} />
								<Stat label={r[2]} value={r[3]} />
							</StatRow>
						))}
					</Stats>
					<MiniHead>
						上海九百
						<MiniQuote>10.53 10.03%</MiniQuote>
					</MiniHead>
					<MiniChart />
					<PanelTabs>
						{["笔", "价", "细", "势", "联", "值", "主", "筹"].map((t) => (
							<PanelTab key={t} $active={t === "势"}>{t}</PanelTab>
						))}
					</PanelTabs>
				</Panel>
			</Body>
			<StatusBar>
				<StatusIcon><StatusInner /></StatusIcon>
				{MARKET.flat().map(([t, w, n]) => <StatusCell key={t} $w={w} $num={n}>{t}</StatusCell>)}
				<Heat viewBox="0 0 162 30">
					<rect x="8" y="5" width="70" height="9" fill="#f6f6f6" />
					<rect x="82" y="5" width="72" height="9" fill="#f6f6f6" />
					<rect x="23" y="5" width="16" height="9" fill="#ff0000" />
					<rect x="40" y="5" width="17" height="9" fill="#0b7d0b" />
					<rect x="107" y="5" width="11" height="9" fill="#ff0000" />
					<rect x="119" y="5" width="7" height="9" fill="#0b7d0b" />
					{[0, 1, 2, 3, 4, 5, 6].flatMap((i) => [17, 22].flatMap((y) => [
						<rect key={`g${i}${y}`} x={8 + i * 10.2} y={y} width="9" height="4" fill="#0b7d0b" />,
						<rect key={`r${i}${y}`} x={87 + i * 10.2} y={y} width="9" height="4" fill="#ff2020" />,
					]))}
				</Heat>
				<Broker>安信证券上海行情</Broker>
				<StatusTray />
			</StatusBar>
			<Watermark>178448.COM</Watermark>
		</Page>
	);
};

export default App;
